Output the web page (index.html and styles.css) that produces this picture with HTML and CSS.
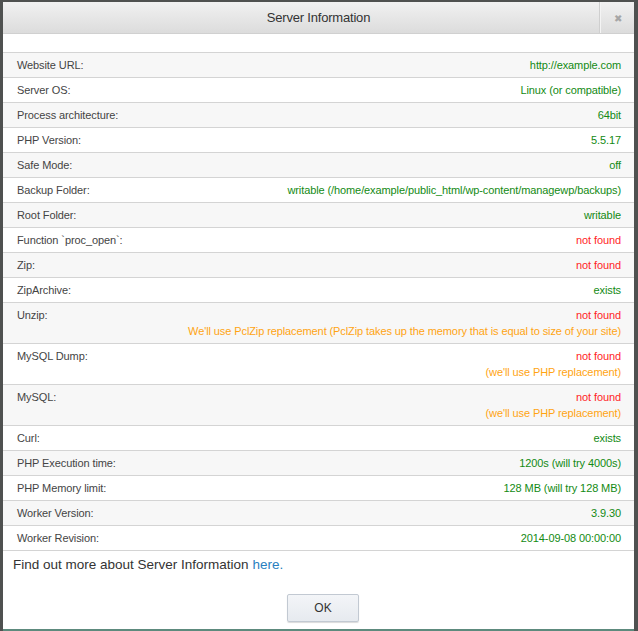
FILE: index.html
```html
<!DOCTYPE html>
<html>
<head>
<meta charset="utf-8">
<link rel="stylesheet" href="styles.css">
</head>
<body>
<div class="dialog">
  <div class="header">
    <span class="title">Server Information</span>
    <span class="close">&#x2716;</span>
  </div>
  <div class="content">
    <div class="row odd"><span class="label">Website URL:</span><span class="val ok">http://example.com</span></div>
    <div class="row"><span class="label">Server OS:</span><span class="val ok">Linux (or compatible)</span></div>
    <div class="row odd"><span class="label">Process architecture:</span><span class="val ok">64bit</span></div>
    <div class="row"><span class="label">PHP Version:</span><span class="val ok">5.5.17</span></div>
    <div class="row odd"><span class="label">Safe Mode:</span><span class="val ok">off</span></div>
    <div class="row"><span class="label">Backup Folder:</span><span class="val ok">writable (/home/example/public_html/wp-content/managewp/backups)</span></div>
    <div class="row odd"><span class="label">Root Folder:</span><span class="val ok">writable</span></div>
    <div class="row"><span class="label">Function `proc_open`:</span><span class="val bad">not found</span></div>
    <div class="row odd"><span class="label">Zip:</span><span class="val bad">not found</span></div>
    <div class="row"><span class="label">ZipArchive:</span><span class="val ok">exists</span></div>
    <div class="row odd"><span class="label">Unzip:</span><span class="val"><span class="bad">not found</span><span class="warn">We'll use PclZip replacement (PclZip takes up the memory that is equal to size of your site)</span></span></div>
    <div class="row"><span class="label">MySQL Dump:</span><span class="val"><span class="bad">not found</span><span class="warn">(we'll use PHP replacement)</span></span></div>
    <div class="row odd"><span class="label">MySQL:</span><span class="val"><span class="bad">not found</span><span class="warn">(we'll use PHP replacement)</span></span></div>
    <div class="row"><span class="label">Curl:</span><span class="val ok">exists</span></div>
    <div class="row odd"><span class="label">PHP Execution time:</span><span class="val ok">1200s (will try 4000s)</span></div>
    <div class="row"><span class="label">PHP Memory limit:</span><span class="val ok">128 MB (will try 128 MB)</span></div>
    <div class="row odd"><span class="label">Worker Version:</span><span class="val ok">3.9.30</span></div>
    <div class="row"><span class="label">Worker Revision:</span><span class="val ok">2014-09-08 00:00:00</span></div>
    <p class="more">Find out more about Server Information <a href="#">here.</a></p>
  </div>
  <div class="footer"><button class="btn">OK</button></div>
</div>
</body>
</html>
```

FILE: styles.css
```css
html, body {
  margin: 0;
  padding: 0;
}
body {
  background: #4f5150;
  width: 638px;
  height: 631px;
  overflow: hidden;
  font-family: "Liberation Sans", Arial, sans-serif;
  color: #333;
}
.dialog {
  margin: 2px 0 0 3px;
  width: 631px;
  height: 627px;
  background: #fff;
  display: flex;
  flex-direction: column;
  position: relative;
  border-bottom: 2px solid #5d8a7d;
}
.header {
  height: 32px;
  flex: none;
  background: linear-gradient(#f1f1f1, #dcdcdc);
  border-bottom: 1px solid #d0d0d0;
  box-sizing: border-box;
  display: flex;
  align-items: center;
  justify-content: center;
  position: relative;
}
.title {
  font-size: 13px;
  letter-spacing: -0.2px;
  color: #333;
}
.close {
  position: absolute;
  right: 0;
  top: 0;
  width: 34px;
  height: 31px;
  border-left: 1px solid #f4f4f4;
  box-shadow: -1px 0 0 #cfcfcf;
  display: flex;
  align-items: center;
  justify-content: center;
  font-size: 10px;
  color: #a6a6a6;
  padding-top: 2px;
  box-sizing: border-box;
}
.content {
  padding-top: 18px;
  flex: 1;
}
.row {
  display: flex;
  justify-content: space-between;
  align-items: flex-start;
  border-top: 1px solid #d4d4d4;
  padding: 4px 13px 4px 14px;
  font-size: 11px;
  line-height: 16px;
  letter-spacing: -0.1px;
  min-height: 24px;
  box-sizing: border-box;
}
.row:last-of-type {
  border-bottom: 1px solid #d4d4d4;
}
.row.odd {
  background: #f7f7f7;
}
.label {
  color: #444;
}
.val {
  text-align: right;
  display: flex;
  flex-direction: column;
  align-items: flex-end;
}
.ok { color: #138a13; }
.bad { color: #ff1f1f; }
.warn { color: #ffa412; }
.more {
  margin: 0;
  padding: 5px 10px 0 10px;
  font-size: 13.5px;
  line-height: 17px;
  color: #333;
}
.more a {
  color: #2a7fbf;
  text-decoration: none;
}
.footer {
  flex: none;
  height: 35px;
  display: flex;
  justify-content: center;
  padding-left: 9px;
}
.btn {
  width: 72px;
  height: 28px;
  background: linear-gradient(#f3f5f8, #e6eaef);
  border: 1px solid #c2c9d2;
  border-radius: 2px;
  box-shadow: 0 1px 1px rgba(0,0,0,0.15);
  font-family: "Liberation Sans", Arial, sans-serif;
  font-size: 12px;
  color: #333;
  padding: 0;
}
```
